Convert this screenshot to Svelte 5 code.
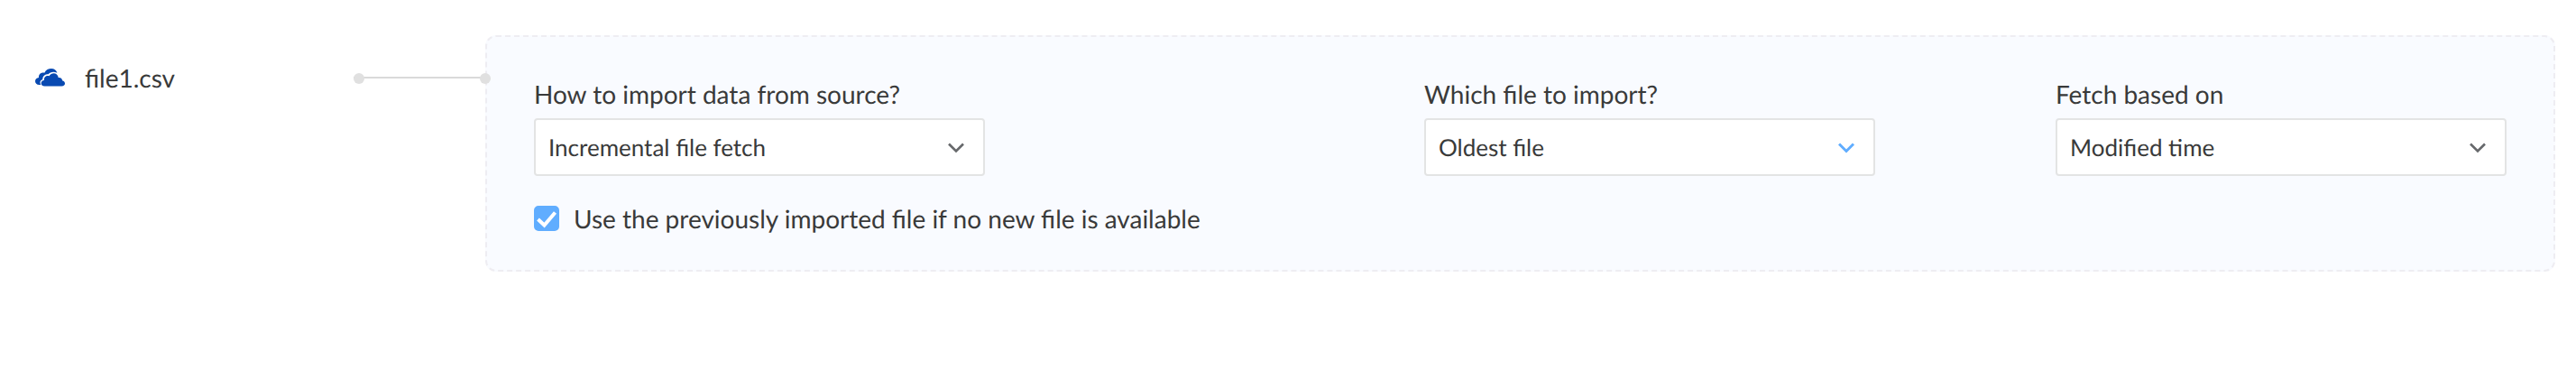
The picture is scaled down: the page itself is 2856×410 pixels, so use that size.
<script>
  const fields = [
    {
      id: "fetch-mode",
      label: "How to import data from source?",
      options: ["Incremental file fetch", "Full file fetch"],
    },
    {
      id: "file-choice",
      label: "Which file to import?",
      options: ["Oldest file", "Newest file"],
      active: true,
    },
    {
      id: "fetch-basis",
      label: "Fetch based on",
      options: ["Modified time", "Created time"],
    },
  ];

  let values = $state(fields.map((field) => field.options[0]));
  let usePrevious = $state(true);
</script>

<main class="import-row">
  <div class="source">
    <svg class="cloud" viewBox="0 0 100 60" aria-hidden="true">
      <path
        d="M19 54H14C5 54 0 49 0 42C0 35 5 31 12 30C11 19 20 12 31 14C36 4 45 0 54 0C64 0 71 5 74 14C62 9 50 11 44 19C33 19 25 25 25 36C16 39 15 47 19 54Z"
      />
      <path
        d="M32 59C24 59 20 54 20 49C20 43 24 39 30 39C29 28 38 22 47 25C55 10 76 13 78 30C86 29 91 33 91 40C97 41 100 45 100 50C100 55 96 59 89 59Z"
      />
    </svg>
    <span>file1.csv</span>
  </div>

  <div class="connector"></div>

  <section class="panel">
    <div class="fields">
      {#each fields as field, i}
        <div class="field">
          <label for={field.id}>{field.label}</label>
          <div class="select-box">
            <select id={field.id} bind:value={values[i]}>
              {#each field.options as option}
                <option>{option}</option>
              {/each}
            </select>
            <svg class="chevron" class:active={field.active} viewBox="0 0 18 12" aria-hidden="true">
              <path d="M1 1.5L9 9.5L17 1.5" />
            </svg>
          </div>
        </div>
      {/each}
    </div>

    <label class="check-row">
      <span class="check-box">
        <input type="checkbox" bind:checked={usePrevious} />
        <svg class="tick" viewBox="0 0 28 28" aria-hidden="true">
          <path d="M4.5 15L11.5 21.5L23.5 7.5" />
        </svg>
      </span>
      Use the previously imported file if no new file is available
    </label>
  </section>
</main>

<style>
  :global(body) {
    margin: 0;
    background: #fff;
  }

  .import-row {
    display: flex;
    align-items: flex-start;
    padding: 39px 23px 39px 39px;
    font-family: Lato, sans-serif;
    font-size: 28px;
    line-height: 34px;
    color: #393a3a;
    text-rendering: geometricPrecision;
  }

  .source {
    display: flex;
    align-items: center;
    gap: 22px;
    flex: 0 0 353px;
    margin-top: 30px;
  }

  .cloud {
    width: 33px;
    height: 20px;
    fill: #094ab2;
  }

  .connector {
    position: relative;
    flex: 0 0 146px;
    height: 2px;
    margin-top: 46px;
    background: #dadada;
  }

  .connector::before,
  .connector::after {
    content: "";
    position: absolute;
    top: -4px;
    width: 12px;
    height: 12px;
    border-radius: 50%;
    background: #e0e0e0;
    z-index: 1;
  }

  .connector::before {
    left: 0;
  }

  .connector::after {
    right: -6px;
  }

  .panel {
    flex: 1;
    min-width: 0;
    padding: 46px 52px 40px;
    border: 2px dashed #eeedf2;
    border-radius: 12px;
    background: #f9fbff;
  }

  .fields {
    display: grid;
    grid-template-columns: 1fr 700px 500px;
  }

  .field label {
    display: block;
    margin-bottom: 10px;
  }

  .select-box {
    position: relative;
    max-width: 500px;
  }

  select {
    display: block;
    appearance: none;
    box-sizing: border-box;
    width: 100%;
    height: 64px;
    margin: 0;
    padding: 0 56px 0 14px;
    border: 2px solid #e3e4e4;
    border-radius: 4px;
    background: #fff;
    color: inherit;
    font-family: inherit;
    font-size: 26px;
    text-rendering: inherit;
    cursor: pointer;
  }

  .chevron {
    position: absolute;
    top: 27px;
    right: 23px;
    width: 18px;
    height: 12px;
    fill: none;
    stroke: #66686b;
    stroke-width: 2.6;
    pointer-events: none;
  }

  .chevron.active {
    stroke: #60adff;
    stroke-width: 3;
  }

  .check-row {
    display: flex;
    align-items: center;
    gap: 16px;
    margin-top: 30px;
    cursor: pointer;
  }

  .check-box {
    position: relative;
    display: flex;
  }

  .check-box input {
    appearance: none;
    width: 28px;
    height: 28px;
    margin: 0;
    border: 2px solid #c9ccd1;
    border-radius: 5px;
    background: #fff;
    cursor: pointer;
  }

  .check-box input:checked {
    border-color: #60adff;
    background: #60adff;
  }

  .tick {
    position: absolute;
    inset: 0;
    fill: none;
    stroke: #fff;
    stroke-width: 4;
    pointer-events: none;
  }
</style>
